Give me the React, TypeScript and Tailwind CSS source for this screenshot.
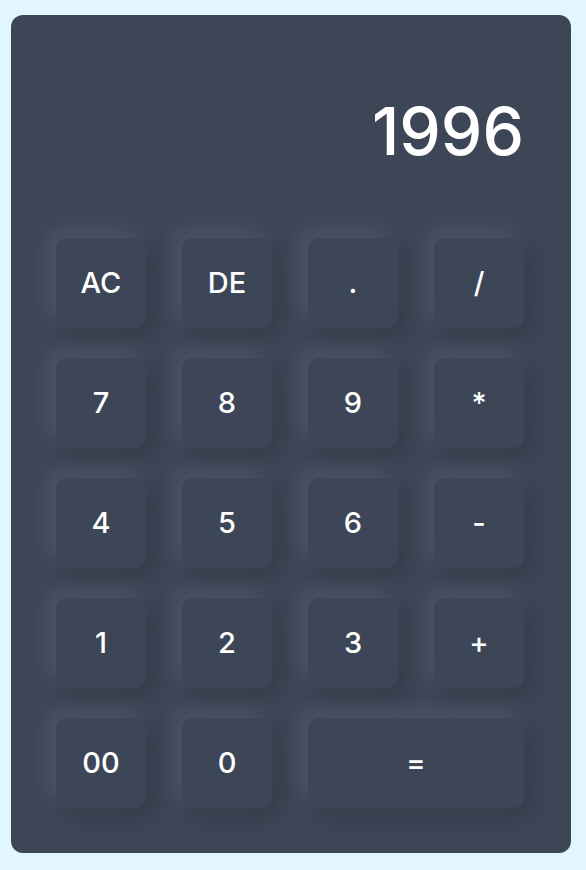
const keys: { label: string; wide?: boolean }[] = [
  { label: 'AC' },
  { label: 'DE' },
  { label: '.' },
  { label: '/' },
  { label: '7' },
  { label: '8' },
  { label: '9' },
  { label: '*' },
  { label: '4' },
  { label: '5' },
  { label: '6' },
  { label: '-' },
  { label: '1' },
  { label: '2' },
  { label: '3' },
  { label: '+' },
  { label: '00' },
  { label: '0' },
  { label: '=', wide: true },
];

export default function App() {
  return (
    <div className="min-h-[870px] w-full bg-[#e2f6fd] pt-[15px] pl-[11px] font-['Inter','Noto_Sans',sans-serif]">
      <div className="w-[560px] h-[838px] rounded-[12px] bg-[#3c4656] pl-[45px] pt-[83px]">
        <div className="w-[468px] text-right text-white text-[66px] font-medium leading-none">1996</div>

        <div className="mt-[74px] grid grid-cols-[repeat(4,90px)] gap-x-[36px] gap-y-[30px]">
          {keys.map((k) => (
            <button
              key={k.label}
              className={`${k.wide ? 'col-span-2' : ''} h-[90px] rounded-[10px] bg-[#3c4656] text-white text-[29px] font-medium flex items-center justify-center shadow-[-8px_-8px_20px_rgba(255,255,255,0.09),8px_8px_20px_rgba(0,0,0,0.15)]`}
            >
              {k.label}
            </button>
          ))}
        </div>
      </div>
    </div>
  );
}
